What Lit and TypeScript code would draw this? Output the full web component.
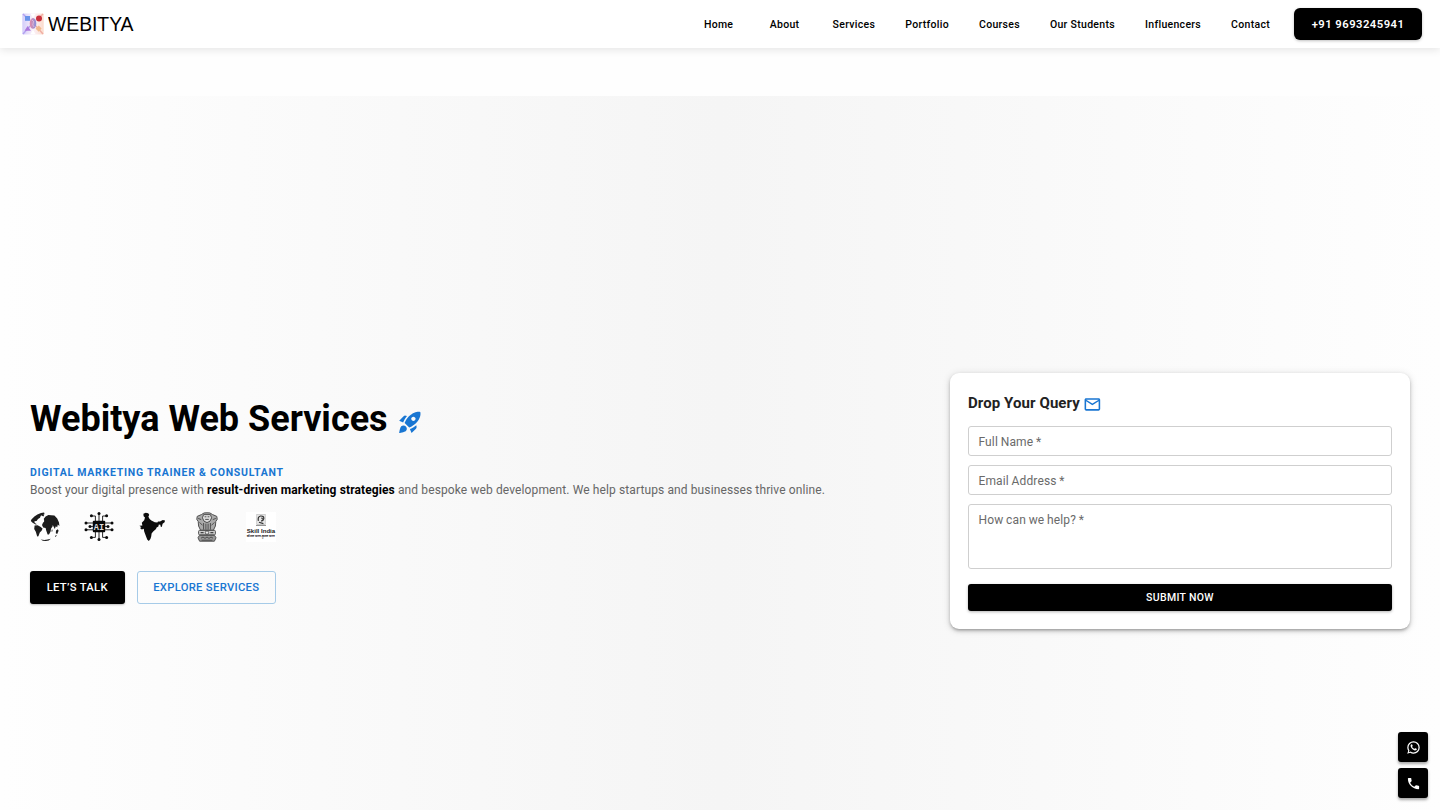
import { LitElement, html, css, svg } from "lit";
import { customElement } from "lit/decorators.js";

const ROCKET = "M9.19 6.35c-2.04 2.29-3.44 5.58-3.57 5.89L2 10.69l4.05-4.05c.47-.47 1.15-.68 1.81-.55l1.33.26zM11.17 17s3.74-1.55 5.89-3.7c5.4-5.4 4.5-9.62 4.21-10.57-.95-.3-5.17-1.19-10.57 4.21C8.55 9.09 7 12.83 7 12.83L11.17 17zm6.48-2.19c-2.29 2.04-5.58 3.44-5.89 3.57L13.31 22l4.05-4.05c.47-.47.68-1.15.55-1.81l-.26-1.33zM9 18c0 .83-.34 1.58-.88 2.12C6.94 21.3 2 22 2 22s.7-4.94 1.88-6.12C4.42 15.34 5.17 15 6 15c1.66 0 3 1.34 3 3zm4-9c0-1.1.9-2 2-2s2 .9 2 2-.9 2-2 2-2-.9-2-2z";
const EMAIL = "M22 6c0-1.1-.9-2-2-2H4c-1.1 0-2 .9-2 2v12c0 1.1.9 2 2 2h16c1.1 0 2-.9 2-2V6zm-2 0-8 5-8-5h16zm0 12H4V8l8 5 8-5v10z";
const WHATSAPP = "M16.75 13.96c.25.13.41.2.46.3.06.11.04.61-.21 1.18-.2.56-1.24 1.1-1.7 1.12-.46.02-.47.36-2.96-.73-2.49-1.09-3.99-3.75-4.11-3.92-.12-.17-.96-1.38-.92-2.61.05-1.22.69-1.8.95-2.04.24-.26.51-.29.68-.26h.47c.15 0 .36-.06.55.45l.69 1.87c.06.13.1.28.01.44l-.27.41-.39.42c-.12.12-.26.25-.12.5.12.26.62 1.09 1.32 1.78.91.88 1.71 1.17 1.95 1.3.24.14.39.12.54-.04l.81-.94c.19-.25.35-.19.58-.11l1.67.88M12 2a10 10 0 0 1 10 10 10 10 0 0 1-10 10c-1.97 0-3.8-.57-5.35-1.55L2 22l1.55-4.65A9.969 9.969 0 0 1 2 12 10 10 0 0 1 12 2m0 2a8 8 0 0 0-8 8c0 1.72.54 3.31 1.46 4.61L4.5 19.5l2.89-.96A7.95 7.95 0 0 0 12 20a8 8 0 0 0 8-8 8 8 0 0 0-8-8z";
const PHONE = "M6.62 10.79c1.44 2.83 3.76 5.14 6.59 6.59l2.2-2.2c.27-.27.67-.36 1.02-.24 1.12.37 2.33.57 3.57.57.55 0 1 .45 1 1V20c0 .55-.45 1-1 1-9.39 0-17-7.61-17-17 0-.55.45-1 1-1h3.5c.55 0 1 .45 1 1 0 1.25.2 2.45.57 3.57.11.35.03.74-.25 1.02l-2.2 2.2z";

const icon = (d: string, cls: string) =>
  html`<svg class=${cls} viewBox="0 0 24 24" fill="currentColor"><path d=${d} /></svg>`;

const NAV = ["Home", "About", "Services", "Portfolio", "Courses", "Our Students", "Influencers", "Contact"];

const logo = html`<svg class="mark" viewBox="0 0 22 22">
  <defs>
    <linearGradient id="lg" x1="0" y1="0" x2="1" y2="0">
      <stop offset="0" stop-color="#d3cdfa" /><stop offset=".5" stop-color="#fbf2fa" /><stop offset="1" stop-color="#fbdccd" />
    </linearGradient>
    <linearGradient id="lc" x1="0" y1="0" x2="1" y2="0">
      <stop offset="0" stop-color="#e58aa8" /><stop offset="1" stop-color="#8791de" />
    </linearGradient>
  </defs>
  <rect x=".3" y=".6" width="21.4" height="20.8" rx="1" fill="url(#lg)" />
  <path d="M1 1l6 6M1 21l7-8" stroke="#b3a2f0" stroke-width="1.4" />
  <path d="M21 1l-6 6M21 21l-7-8" stroke="#f0aea2" stroke-width="1.4" />
  <path d="M8.5 1h5L11 4.4zM8.5 21h5L11 17z" fill="#fff" />
  <rect x="3" y="3" width="5" height="4.8" fill="#6a93ea" />
  <circle cx="17" cy="5.4" r="3" fill="#c9303c" />
  <ellipse cx="11" cy="10.4" rx="3.3" ry="5.4" fill="url(#lc)" />
  <path d="M9.6 6.8q3 1.200 1.600 3.200t1 4" stroke="#f7d5e4" stroke-width=".6" fill="none" />
  <path d="M5.6 13l3.400 4.800H2.600z" fill="#ab78dd" />
  <path d="M16.8 12.400l2.800 3.200-2.800 3.200-3.200-3z" fill="#f0b98c" />
</svg>`;

const globe = html`<svg class="badge" viewBox="0 0 30 30" fill="#1d1d1d">
  <path d="M1.400 7.400l3-3 3-2 3.600-1.400 3-.4.600.8-1.800 1.600-2 .8-.8 2-2 1.200-1.400 2-2.200.2.400 1.800 2.200 1.200-1.400.4-3-1.800L.800 9z" />
  <path d="M4.600 13.400l3-.2 2.800 1.600 2.200 1.600-1 2.400-1.800 1.600-1.400 3.800-1.200.4-1.400-4.800-1.600-2.800z" />
  <path d="M13 10.800l2.200-2.200 3-.2 2 1.200.800 2.800 1.800 1.600-1.800 2.800-.4 2.600-1.600 3-1.400.2-1.400-4-.6-2.600-2.400-.6-1.200-2.400z" />
  <path d="M13.800 6.800l1.800-2.400 2.800-1.400 2.800.2 3.200.4 2.800 3 1.800 4 .4 3.400-1.600-1.400-.6 2.600-1.400-1-1 2.800-1.800-3.400-1.400.4-2-2.600-2-1-1.600-.6-1.600.4z" />
  <path d="M26 18.400l1.800-1.200.8 1.600-1.400 3.200-1.400-.8zM21.800 17.600l.8.2-.4 2-.7-.2zM25 24l1.400-1 .2.800-1.200 1.200z" />
  <path d="M10.600 27.600q5.400 1 10.200-.8-1.600 2.200-5 2.300-3.200 0-5.200-1.500zM11.600 3.600l1.800-1.400 1 .4-1 2z" />
</svg>`;

const nodes: Array<[number, number]> = [
  [15, 1.6], [15, 27.6], [7.4, 3.8], [22.6, 3.8], [7.4, 25.4], [22.6, 25.4],
  [2, 11], [28, 11], [2, 17.8], [28, 17.8], [6, 14.4], [24, 14.4],
];
const chip = html`<svg class="badge" viewBox="0 0 30 30">
  <path d="M15 2v25M7.400 4h4v21.400h-4M22.600 4h-4v21.400h4M2 11h26M2 17.800h26M6 14.400h18" fill="none" stroke="#111" stroke-width=".9" />
  ${nodes.map(([x, y]) => svg`<circle cx=${x} cy=${y} r="1.5" fill="#0b0b0b" />`)}
  <rect x="8.8" y="8.8" width="12.4" height="11.4" rx="1" fill="#080808" />
  <text class="chip-text" x="15" y="17.6" text-anchor="middle">AI</text>
</svg>`;

const india = html`<svg class="badge" viewBox="0 0 30 30" fill="#0c0c0c">
  <path d="M5.400 1.800l2.400-1 2.400.4 1 1.600-.8 2 1.200 2.200 1.800 1.400 3.400 1.800 2.600.4.600-1.200 2 .2 2.800-1.600 2.200.6-.4 1.600-2 1.600-.8 3.200-1.200-.4-.2-1.800-1.600-.4-.4 2-1.800 1-.6 1.600-2.800 2.400-1.600 2-.4 3.200-.8 2.400-1.600 2-1.600-1.600-1.800-4.600-1.200-3.400-.4-2.600-2 .8-1.800-1.600 1.400-.8-2-1.400 3-.4-.6-2.600 2.400-2.600.8-2.600-1.400-1.400z" />
</svg>`;

const emblem = html`<svg class="badge" viewBox="0 0 30 30">
  <path d="M9.400 2.600Q12 .2 15 .8q3-.6 5.600 1.800l4.200 1.800.4 3-1.400 2-.4 4.600-2 4.200H8.600l-2-4.200-.4-4.600-1.400-2 .4-3z" fill="#aaa" stroke="#505050" stroke-width="1" />
  <path d="M11.600 2.600h6.800l1.200 3.200-1.600 3.400-3 1.400-3-1.400-1.600-3.400z" fill="#ddd" stroke="#444" stroke-width=".9" />
  <path d="M12.600 4.800h1.800M15.600 4.800h1.800M13.200 7.400h3.600M6.200 6.400l3 1.200M23.800 6.400l-3 1.200M7.600 10.400l3 3M22.400 10.400l-3 3M11.600 11v6.600M13.900 11.600v6M16.100 11.600v6M18.400 11v6.600" stroke="#444" stroke-width=".9" />
  <rect x="6.6" y="18.4" width="16.8" height="4.4" rx="1" fill="#ccc" stroke="#505050" stroke-width="1" />
  <circle cx="15" cy="20.6" r="1.7" fill="#eee" stroke="#444" stroke-width=".8" />
  <path d="M8.600 20.600h3M18.400 20.600h3" stroke="#444" stroke-width="1.4" />
  <path d="M7.400 23.400h15.200l1.400 2.400-1.600 3.400H7.600L6 25.800z" fill="#999" stroke="#505050" stroke-width="1" />
  <path d="M9 26.200l2-1.200 2 1.400 2-1.400 2 1.400 2-1.400 2 1.200M9.600 28.200h10.800" fill="none" stroke="#444" stroke-width=".9" />
</svg>`;

const skill = html`<svg class="badge" viewBox="0 0 30 30">
  <rect width="30" height="30" fill="#fff" />
  <rect x="10.800" y="2.600" width="8.400" height="9.800" fill="#e6e6e6" stroke="#aaa" stroke-width=".5" />
  <path d="M12.400 8.800q-1-4 2.200-4.800 3.400-.2 3.200 2.600-.6 2.600-2.800 2.200M13 10.200l4.400 1.400M15.600 5.600l1 1.600" fill="none" stroke="#333" stroke-width="1.200" />
  <path d="M10 13.400h10" stroke="#555" stroke-width=".7" />
  <text class="skill-a" x=".8" y="21" textLength="28.4" lengthAdjust="spacingAndGlyphs">Skill India</text>
  <text class="skill-b" x=".8" y="25" textLength="28" lengthAdjust="spacingAndGlyphs">कौशल भारत-कुशल भारत</text>
</svg>`;

@customElement("app-root")
export class AppRoot extends LitElement {
  static styles = css`
    :host {
      display: flex;
      flex-direction: column;
      height: 100vh;
      overflow: hidden;
      background: #fefefe;
      font-family: Roboto, sans-serif;
      color: #000;
    }
    * { box-sizing: border-box; }
    button { font-family: inherit; border: 0; margin: 0; white-space: nowrap; }
    .bar {
      flex: none;
      display: flex;
      align-items: center;
      height: 48px;
      padding: 0 18px 0 22px;
      background: #fff;
      box-shadow: 0 2px 8px rgba(0, 0, 0, 0.1);
    }
    .brand { display: flex; align-items: center; gap: 4px; margin-right: auto; }
    .mark { width: 22px; height: 22px; display: block; }
    .word { display: block; width: 88px; height: 24px; }
    .word-text { font: 19.4px "Liberation Sans", Arial, sans-serif; }
    .nav { display: flex; gap: 12px; }
    .link {
      min-width: 54px;
      padding: 1px 9px 0;
      background: none;
      color: #000;
      font-size: 10.5px;
      font-weight: 500;
      line-height: 24px;
      letter-spacing: 0.305px;
      text-align: center;
    }
    .call {
      width: 128px;
      height: 32px;
      margin-left: 15px;
      padding: 0;
      border-radius: 6px;
      background: #000;
      color: #fff;
      font-size: 11.25px;
      font-weight: 600;
      letter-spacing: 0.47px;
      box-shadow: 0 1px 3px rgba(0, 0, 0, 0.25);
    }
    .hero {
      flex: none;
      display: flex;
      align-items: center;
      justify-content: space-between;
      height: 810px;
      margin-top: 48px;
      padding: 0 30px;
      background: linear-gradient(90deg, #fefefe, #f5f5f5 50%, #fefefe);
    }
    .intro { display: flex; flex-direction: column; align-items: flex-start; }
    .title {
      display: flex;
      align-items: center;
      margin: 0 0 23px;
      font-size: 36px;
      font-weight: 700;
      line-height: 43px;
    }
    .rocket { width: 26.25px; height: 26.25px; margin: 6px 0 0 9px; color: #1976d2; }
    .over {
      font-size: 10.5px;
      font-weight: 700;
      line-height: 18px;
      letter-spacing: 0.75px;
      color: #1976d2;
    }
    .lead { margin: 0; font-size: 12px; line-height: 17px; letter-spacing: 0.1125px; color: #666; }
    .strong { font-weight: 700; color: #000; }
    .badges { display: flex; gap: 24px; margin-top: 13px; }
    .badge { display: block; width: 30px; height: 30px; overflow: visible; }
    .chip-text { font: 700 8.6px "Liberation Mono", monospace; fill: #ddd; }
    .skill-a { font: 700 6.2px "Liberation Sans", sans-serif; fill: #222; }
    .skill-b { font: 700 3.4px "Noto Sans", sans-serif; fill: #222; }
    .actions { display: flex; gap: 12px; margin: 29px 0 1px; }
    .talk, .explore {
      height: 33px;
      padding: 0;
      border-radius: 3px;
      font-size: 11.25px;
      font-weight: 500;
      letter-spacing: 0.3px;
    }
    .talk {
      width: 94.5px;
      background: #000;
      color: #fff;
      box-shadow: 0 1px 2px rgba(0, 0, 0, 0.25);
    }
    .explore { width: 139.5px; background: none; border: 1px solid #a6cbe8; color: #1976d2; }
    .card {
      display: flex;
      flex-direction: column;
      width: 460px;
      height: 256px;
      padding: 18px;
      border-radius: 9px;
      background: #fff;
      box-shadow: 0 2px 3px -1px rgba(0, 0, 0, 0.25), 0 2px 4px rgba(0, 0, 0, 0.16), 0 1px 8px rgba(0, 0, 0, 0.12);
    }
    .card-title {
      display: flex;
      align-items: center;
      gap: 3px;
      margin: 0 0 11px;
      font-size: 15px;
      font-weight: 700;
      line-height: 24px;
      letter-spacing: 0.09px;
      color: #222;
    }
    .mail { width: 18.75px; height: 18.75px; margin-top: 2px; color: #1976d2; }
    .field {
      height: 30px;
      margin-bottom: 9px;
      padding: 0 9.5px;
      border: 1px solid #cfcfcf;
      border-radius: 3px;
      font-size: 12px;
      line-height: 30px;
      letter-spacing: 0.12px;
      word-spacing: -0.3px;
      color: #6a6a6a;
    }
    .field.tall { height: 65px; margin-bottom: 15px; }
    .submit {
      height: 27.5px;
      padding: 0;
      border-radius: 3px;
      background: #000;
      color: #fff;
      font-size: 10.5px;
      font-weight: 500;
      letter-spacing: 0.32px;
      box-shadow: 0 1px 3px rgba(0, 0, 0, 0.3);
    }
    .float {
      position: fixed;
      right: 12px;
      bottom: 12px;
      display: flex;
      flex-direction: column;
      gap: 6px;
    }
    .fab {
      display: flex;
      align-items: center;
      justify-content: center;
      width: 30px;
      height: 30px;
      padding: 0;
      border-radius: 3px;
      background: #000;
      color: #fff;
      box-shadow: 0 2px 3px rgba(0, 0, 0, 0.35);
    }
    .fab-icon { width: 15px; height: 15px; }
  `;

  render() {
    return html`
      <header class="bar">
        <div class="brand">
          ${logo}
          <svg class="word" viewBox="0 0 88 24"><text class="word-text" x="0" y="19" textLength="85.5">WEBITYA</text></svg>
        </div>
        <nav class="nav">${NAV.map((n) => html`<button class="link">${n}</button>`)}</nav>
        <button class="call">+91 9693245941</button>
      </header>
      <main class="hero">
        <section class="intro">
          <h1 class="title">Webitya Web Services ${icon(ROCKET, "rocket")}</h1>
          <div class="over">DIGITAL MARKETING TRAINER &amp; CONSULTANT</div>
          <p class="lead">Boost your digital presence with <span class="strong">result-driven marketing strategies</span> and bespoke web development. We help startups and businesses thrive online.</p>
          <div class="badges">${globe}${chip}${india}${emblem}${skill}</div>
          <div class="actions">
            <button class="talk">LET’S TALK</button>
            <button class="explore">EXPLORE SERVICES</button>
          </div>
        </section>
        <form class="card">
          <h2 class="card-title">Drop Your Query ${icon(EMAIL, "mail")}</h2>
          <div class="field">Full Name *</div>
          <div class="field">Email Address *</div>
          <div class="field tall">How can we help? *</div>
          <button class="submit" type="button">SUBMIT NOW</button>
        </form>
      </main>
      <div class="float">
        <button class="fab">${icon(WHATSAPP, "fab-icon")}</button>
        <button class="fab">${icon(PHONE, "fab-icon")}</button>
      </div>
    `;
  }
}
